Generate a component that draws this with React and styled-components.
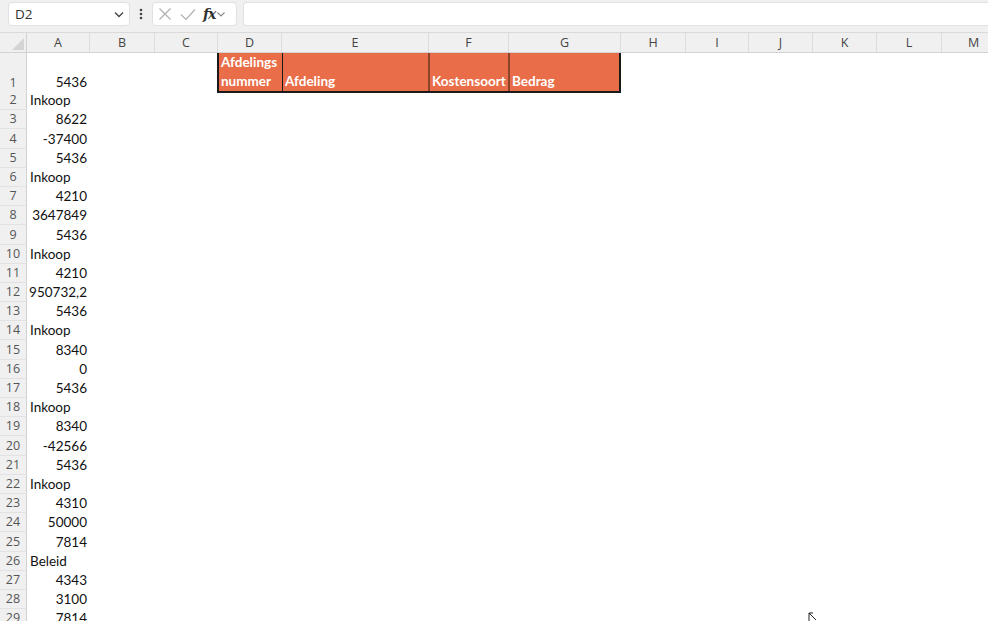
import React from "react";
import styled, { createGlobalStyle } from "styled-components";

const GlobalStyle = createGlobalStyle`
    html, body {
        margin : 0;
        padding : 0;
        background : #ffffff;
        overflow : hidden;
    }
    #root {
        width : 988px;
        height : 621px;
        overflow : hidden;
    }
`

// row header + A..M
const COLS = "27px 63px 65px 63px 64px 147px 80px 112px 65px 63px 64px 64px 65px 64px"
const LETTERS = ["A", "B", "C", "D", "E", "F", "G", "H", "I", "J", "K", "L", "M"]

const Page = styled.div`
    width : 988px;
    height : 621px;
    display : flex;
    flex-direction : column;
    background : #f0f0f0;
    overflow : hidden;
`

const Toolbar = styled.div`
    height : 32px;
    flex-shrink : 0;
    display : flex;
    align-items : flex-start;
    padding : 2px 0 0 8px;
    box-sizing : border-box;
`

const NameBox = styled.div`
    width : 122px;
    height : 24px;
    box-sizing : border-box;
    background : #ffffff;
    border : 1px solid #e1e1e1;
    border-radius : 4px;
    display : flex;
    align-items : center;
    justify-content : space-between;
    padding : 0 4px 0 6px;
    font-family : "Open Sans", sans-serif;
    font-size : 13.5px;
    color : #333;
`

const Dots = styled.div`
    width : 22px;
    height : 24px;
    display : flex;
    align-items : center;
    justify-content : center;
`

const FxBox = styled.div`
    width : 85px;
    height : 24px;
    box-sizing : border-box;
    background : #ffffff;
    border : 1px solid #e1e1e1;
    border-radius : 4px;
    display : flex;
    align-items : center;
    padding : 0 4px 0 4px;
    gap : 6px;
`

const Fx = styled.span`
    font-family : "DejaVu Serif", serif;
    font-style : italic;
    font-weight : bold;
    font-size : 14px;
    color : #333;
    letter-spacing : -1px;
`

const FormulaInput = styled.div`
    flex : 1;
    margin-left : 6px;
    height : 24px;
    box-sizing : border-box;
    background : #ffffff;
    border : 1px solid #e1e1e1;
    border-right : none;
    border-radius : 4px 0 0 4px;
`

const Sheet = styled.div`
    flex : 1;
    display : flex;
    flex-direction : column;
    background : #ffffff;
    border-top : 1px solid #dadada;
    min-height : 0;
`

const HeaderRow = styled.div`
    display : grid;
    grid-template-columns : ${COLS};
    height : 19px;
    flex-shrink : 0;
    background : #f0f0f0;
    border-bottom : 1px solid #d2d2d2;
`

const Corner = styled.div`
    position : relative;
    border-right : 1px solid #d2d2d2;
    &::after {
        content : "";
        position : absolute;
        right : 2px;
        bottom : 2px;
        width : 0;
        height : 0;
        border-left : 12px solid transparent;
        border-bottom : 12px solid #d4d4d4;
    }
`

const ColLetter = styled.div`
    display : flex;
    align-items : center;
    justify-content : center;
    font-family : "Open Sans", sans-serif;
    font-size : 12.5px;
    color : #444;
    border-right : 1px solid #dcdcdc;
`

const Row = styled.div`
    display : grid;
    grid-template-columns : ${COLS};
    height : ${props => props.$h}px;
    flex-shrink : 0;
`

const RowNum = styled.div`
    background : #f0f0f0;
    border-right : 1px solid #d2d2d2;
    border-bottom : 1px solid #e2e2e2;
    box-sizing : border-box;
    display : flex;
    align-items : flex-end;
    justify-content : center;
    padding-bottom : 1px;
    font-family : "Open Sans", sans-serif;
    font-size : 12.5px;
    color : #555;
    line-height : 17px;
`

const Cell = styled.div`
    display : flex;
    align-items : flex-end;
    justify-content : ${props => props.$num ? "flex-end" : "flex-start"};
    padding : 0 3px ${props => props.$lift || 1}px 3px;
    font-family : "Lato", "Liberation Sans", sans-serif;
    font-size : 13.5px;
    color : #111;
    line-height : 17px;
    white-space : nowrap;
    overflow : visible;
`

const HeadBlock = styled.div`
    grid-column : 5 / 9;
    display : grid;
    grid-template-columns : 64px 147px 80px 112px;
    margin-left : -1px;
    background : #e86d48;
    border-left : 2px solid #1a1a1a;
    border-right : 2px solid #1a1a1a;
    border-bottom : 2px solid #1a1a1a;
    box-sizing : border-box;
`

const HeadCell = styled.div`
    display : flex;
    align-items : flex-end;
    padding : 0 2px 0 2px;
    font-family : "Lato", "Liberation Sans", sans-serif;
    font-weight : bold;
    font-size : 13.5px;
    line-height : 19px;
    color : #ffffff;
    border-right : ${props => props.$edge || "none"};
    box-sizing : border-box;
`

const Cursor = styled.svg`
    position : absolute;
    left : 808px;
    top : 612px;
`

const data = [
    "Inkoop", 8622, -37400, 5436, "Inkoop", 4210, 3647849, 5436, "Inkoop", 4210,
    "950732,2", 5436, "Inkoop", 8340, 0, 5436, "Inkoop", 8340, -42566, 5436,
    "Inkoop", 4310, 50000, 7814, "Beleid", 4343, 3100, 7814,
]

const isText = v => typeof v === "string" && !/^[-\d,]+$/.test(v)

const App = () => {
    return(
        <>
        <GlobalStyle />
        <Page>
            <Toolbar>
                <NameBox>
                    <span>D2</span>
                    <svg width="12" height="12" viewBox="0 0 12 12">
                        <path d="M2 4.5 L6 8.5 L10 4.5" fill="none" stroke="#444" strokeWidth="1.3" />
                    </svg>
                </NameBox>
                <Dots>
                    <svg width="4" height="12" viewBox="0 0 4 12">
                        <circle cx="2" cy="2" r="1.3" fill="#444" />
                        <circle cx="2" cy="6" r="1.3" fill="#444" />
                        <circle cx="2" cy="10" r="1.3" fill="#444" />
                    </svg>
                </Dots>
                <FxBox>
                    <svg width="16" height="16" viewBox="0 0 16 16">
                        <path d="M2.5 2.5 L13.5 13.5 M13.5 2.5 L2.5 13.5" stroke="#b0b0b0" strokeWidth="1.2" />
                    </svg>
                    <svg width="18" height="16" viewBox="0 0 18 16">
                        <path d="M2 8.5 L7 13.5 L16 3.5" fill="none" stroke="#b0b0b0" strokeWidth="1.2" />
                    </svg>
                    <Fx>fx</Fx>
                    <svg width="10" height="10" viewBox="0 0 10 10" style={{marginLeft: -5}}>
                        <path d="M1.5 3.5 L5 7 L8.5 3.5" fill="none" stroke="#888" strokeWidth="1.1" />
                    </svg>
                </FxBox>
                <FormulaInput />
            </Toolbar>

            <Sheet>
                <HeaderRow>
                    <Corner />
                    {LETTERS.map(l => <ColLetter key={l}>{l}</ColLetter>)}
                </HeaderRow>

                <Row $h={38}>
                    <RowNum>1</RowNum>
                    <Cell $num $lift={2}>5436</Cell>
                    <Cell />
                    <Cell />
                    <HeadBlock>
                        <HeadCell $edge="1px solid #1a1a1a">Afdelings<br />nummer</HeadCell>
                        <HeadCell $edge="2px solid #8a4528">Afdeling</HeadCell>
                        <HeadCell $edge="2px solid #8a4528">Kostensoort</HeadCell>
                        <HeadCell>Bedrag</HeadCell>
                    </HeadBlock>
                </Row>

                {data.map((v, i) => (
                    <Row key={i} $h={19.2}>
                        <RowNum>{i + 2}</RowNum>
                        <Cell $num={!isText(v)}>{v}</Cell>
                    </Row>
                ))}
            </Sheet>
        </Page>
        <Cursor width="10" height="12" viewBox="0 0 10 12">
            <path d="M1 1 L1 9 M1 1 L8 8 M1 1 L5 1" fill="none" stroke="#222" strokeWidth="1" />
        </Cursor>
        </>
    )
}

export default App;
